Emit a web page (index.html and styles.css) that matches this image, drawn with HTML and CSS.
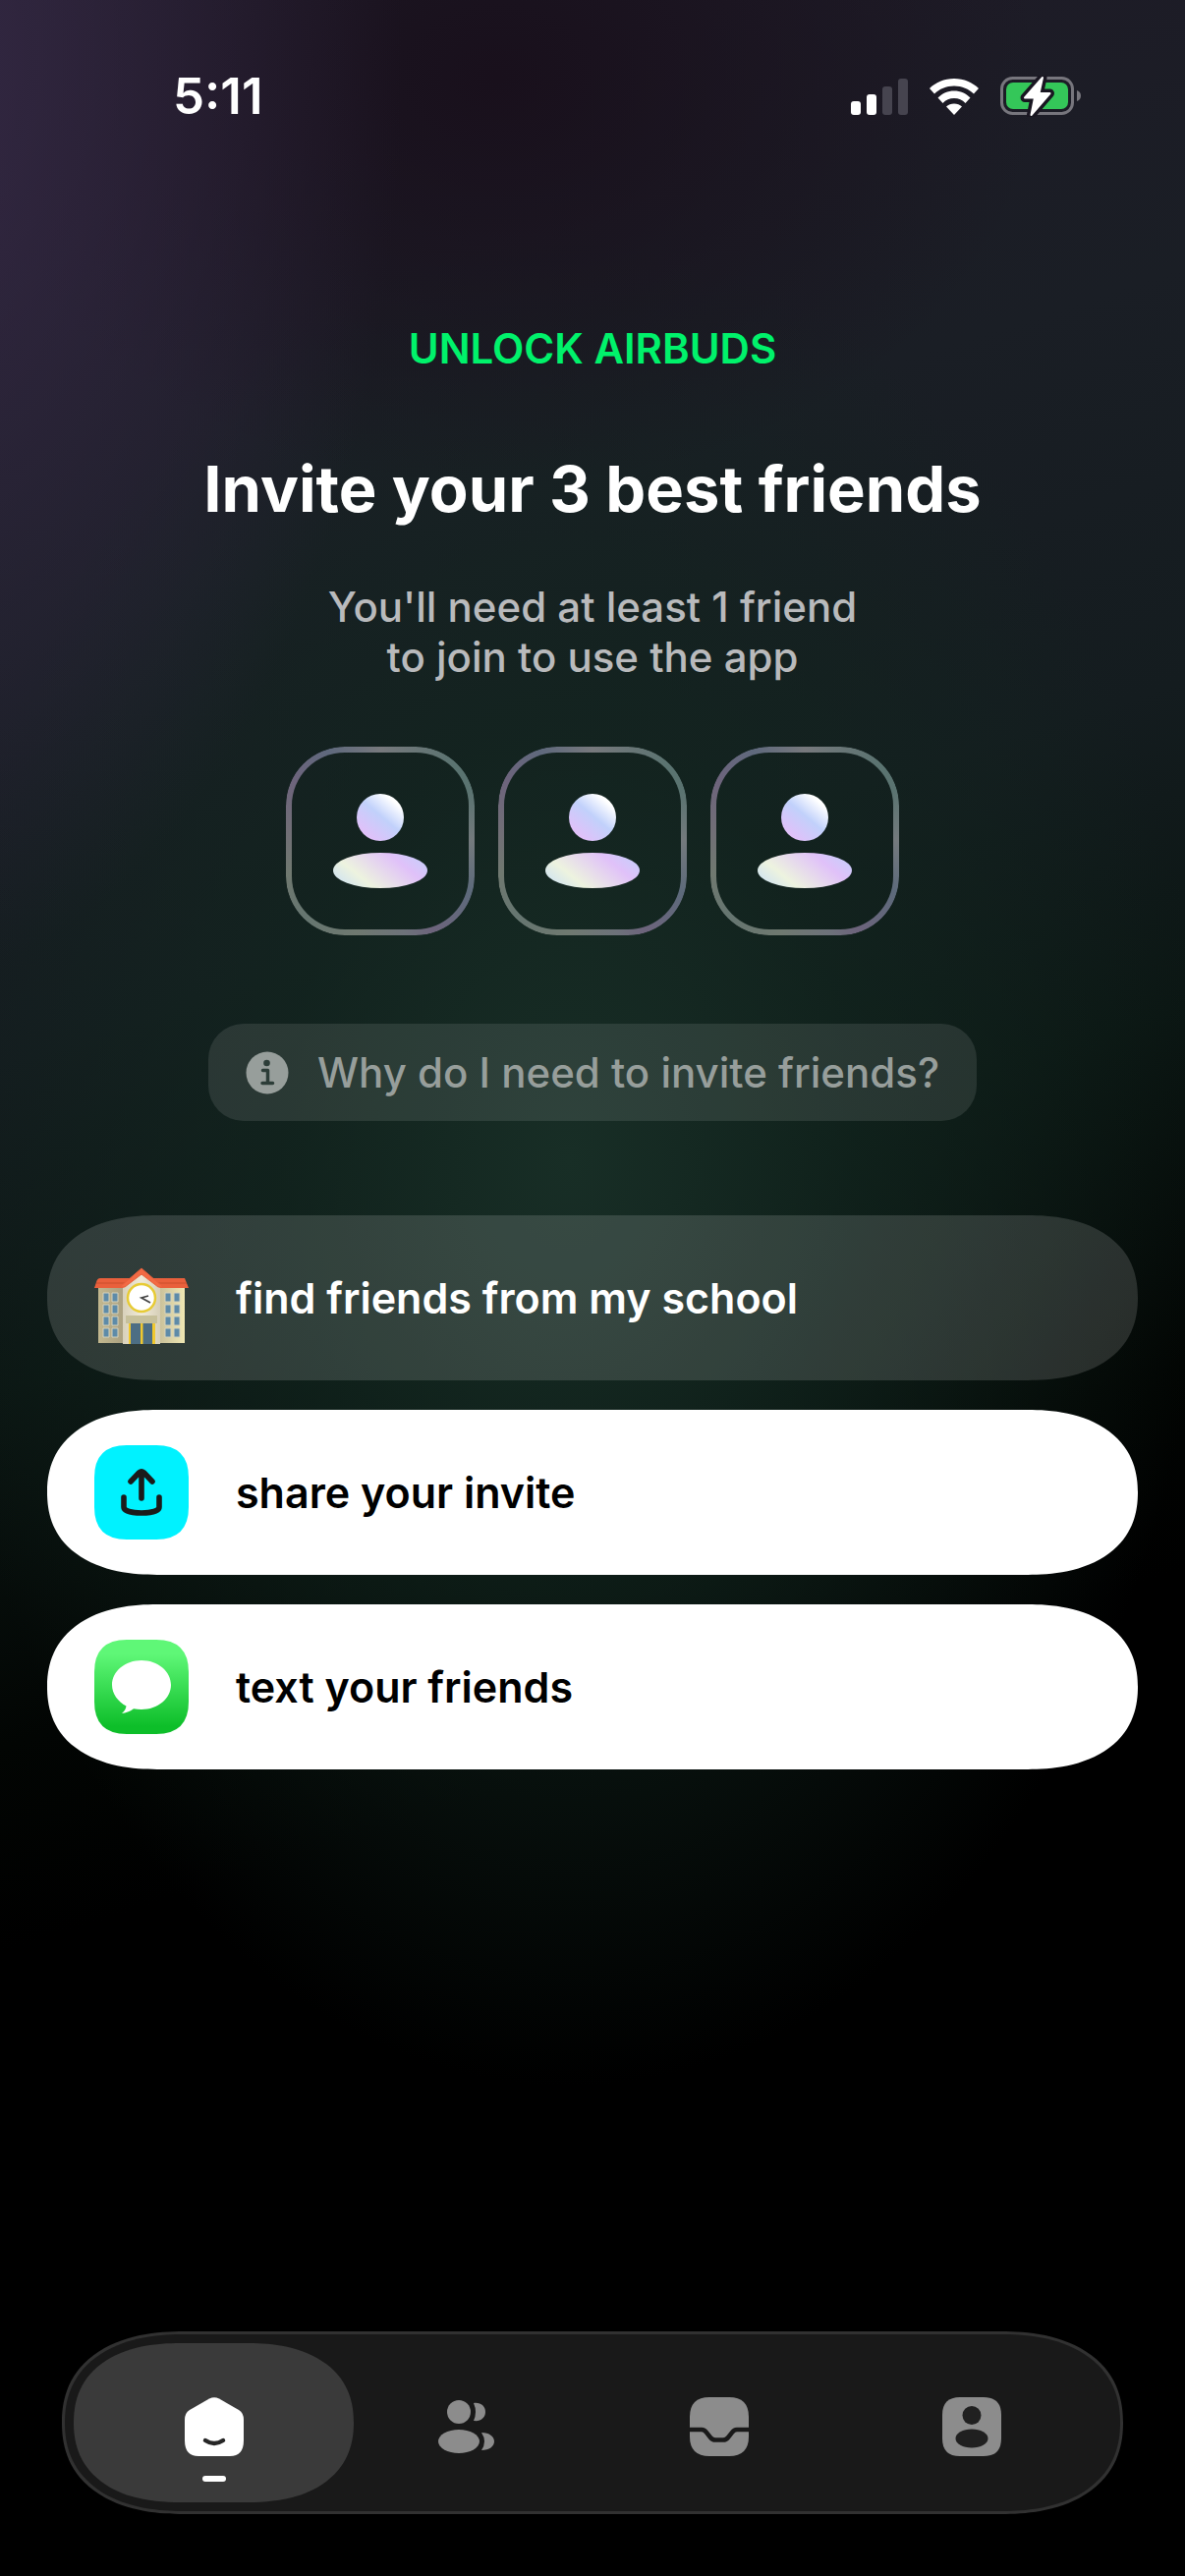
FILE: index.html
```html
<!DOCTYPE html>
<html lang="en">
<head>
<meta charset="utf-8">
<meta name="viewport" content="width=device-width, initial-scale=1">
<title>Airbuds</title>
<link rel="stylesheet" href="styles.css">
</head>
<body>
<div class="screen">
  <header class="status">
    <span class="time">5:11</span>
    <div class="status-icons">
      <svg class="signal" viewBox="0 0 58 38" aria-hidden="true">
        <rect x="0" y="24" width="10" height="14" rx="3" fill="#fff"/>
        <rect x="16" y="17" width="10" height="21" rx="3" fill="#fff"/>
        <rect x="32" y="9" width="10" height="29" rx="3" fill="#46444f"/>
        <rect x="48" y="1" width="10" height="37" rx="3" fill="#46444f"/>
      </svg>
      <svg class="wifi" viewBox="0 0 50 38" aria-hidden="true">
        <path d="M25 1C35 1 44 5 50 11L45 16.500C40 11.500 33 8.500 25 8.500S10 11.500 5 16.500L0 11C6 5 15 1 25 1Z" fill="#fff"/>
        <path d="M25 13.500C31.500 13.500 37 16 41.500 20.500L36.500 26C33.500 22.800 29.500 21 25 21S16.500 22.800 13.500 26L8.500 20.500C13 16 18.500 13.500 25 13.500Z" fill="#fff"/>
        <path d="M25 26.500C28 26.500 31 27.500 33 29.500L25 38L17 29.500C19 27.500 22 26.500 25 26.500Z" fill="#fff"/>
      </svg>
      <svg class="battery" viewBox="0 0 82 42" aria-hidden="true">
        <rect x="1.500" y="2.500" width="72" height="36" rx="11" fill="none" stroke="#77767d" stroke-width="3"/>
        <path d="M78 15C81 16 82 18 82 20.500S81 25 78 26Z" fill="#77767d"/>
        <rect x="6" y="7" width="63" height="27" rx="7" fill="#34c759"/>
        <path d="M43 2L25 22.500H35L31.500 40L50.500 18H39.500Z" fill="#fff" stroke="#191621" stroke-width="9" stroke-linejoin="round"/>
        <path d="M43 2L25 22.500H35L31.500 40L50.500 18H39.500Z" fill="#fff" stroke="#fff" stroke-width="2" stroke-linejoin="round"/>
      </svg>
    </div>
  </header>

  <main class="content">
    <p class="eyebrow">UNLOCK AIRBUDS</p>
    <h1 class="title">Invite your 3 best friends</h1>
    <p class="subtitle">You'll need at least 1 friend<br>to join to use the app</p>

    <svg class="defs" aria-hidden="true">
      <defs>
        <linearGradient id="person" gradientUnits="userSpaceOnUse" x1="62" y1="144" x2="132" y2="60">
          <stop offset="0" stop-color="#d3e5ef"/>
          <stop offset=".16" stop-color="#edf3df"/>
          <stop offset=".5" stop-color="#e0c1f9"/>
          <stop offset=".72" stop-color="#c1d1fb"/>
          <stop offset=".9" stop-color="#fff"/>
        </linearGradient>
      </defs>
    </svg>
    <div class="slots">
      <div class="slot"><svg viewBox="0 0 192 192" aria-hidden="true"><circle cx="96" cy="72" r="24" fill="url(#person)"/><ellipse cx="96" cy="126" rx="48" ry="18" fill="url(#person)"/></svg></div>
      <div class="slot"><svg viewBox="0 0 192 192" aria-hidden="true"><circle cx="96" cy="72" r="24" fill="url(#person)"/><ellipse cx="96" cy="126" rx="48" ry="18" fill="url(#person)"/></svg></div>
      <div class="slot"><svg viewBox="0 0 192 192" aria-hidden="true"><circle cx="96" cy="72" r="24" fill="url(#person)"/><ellipse cx="96" cy="126" rx="48" ry="18" fill="url(#person)"/></svg></div>
    </div>

    <button class="why" type="button">
      <svg class="info" viewBox="0 0 44 44" aria-hidden="true">
        <circle cx="22" cy="22" r="21.500" fill="#979e9b"/>
        <circle cx="21.500" cy="12" r="3.300" fill="#2c3d38"/>
        <path d="M17.500 19.500H22.500V32.500M17 32.500H27.500" fill="none" stroke="#2c3d38" stroke-width="3.500" stroke-linecap="round" stroke-linejoin="round"/>
      </svg>
      <span>Why do I need to invite friends?</span>
    </button>

    <div class="actions">
      <button class="action action-glass" type="button">
        <svg class="action-icon" viewBox="0 0 96 96" aria-hidden="true">
          <defs>
            <linearGradient id="wallLeft"><stop offset="0" stop-color="#c3b88f"/><stop offset="1" stop-color="#a99f80"/></linearGradient>
            <linearGradient id="wallRight"><stop offset="0" stop-color="#c9c09a"/><stop offset="1" stop-color="#efe7b3"/></linearGradient>
            <linearGradient id="tower"><stop offset="0" stop-color="#d8d1bb"/><stop offset=".5" stop-color="#f0ead8"/><stop offset="1" stop-color="#d6cfb8"/></linearGradient>
          </defs>
          <path d="M4 37H31V94H4Z" fill="url(#wallLeft)"/>
          <path d="M66 37H92V94H66Z" fill="url(#wallRight)"/>
          <path d="M6 28H92L96 38H0L2 32Q3 28 6 28Z" fill="#e9603c"/>
          <path d="M2 33H94" stroke="#c94e2c" stroke-width="1"/>
          <path d="M29 38L48 23L67 38V95H29Z" fill="url(#tower)"/>
          <path d="M48 18L26 37H31L48 24L65 37H70Z" fill="#f26a44" stroke="#e9603c" stroke-width="1"/>
          <circle cx="48" cy="48" r="14" fill="#fff" stroke="#e7cb35" stroke-width="2.500"/>
          <path d="M57 53L48 48L55 46" fill="none" stroke="#444" stroke-width="1.800"/>
          <rect x="32" y="66" width="32" height="8" fill="#c6c09b"/>
          <rect x="35" y="74" width="27" height="21" fill="#f0c82e"/>
          <path d="M37 74H47V95H37ZM49.500 74H59V95H49.500Z" fill="#4d6e84"/>
          <g fill="#5e8ba8" stroke="#d6d3bd" stroke-width="1">
            <path d="M9 43h6v9h-6zM18 43h6v9h-6zM72 43h6v9h-6zM81 43h6v9h-6z"/>
            <path d="M9 55h6v9h-6zM18 55h6v9h-6zM72 55h6v9h-6zM81 55h6v9h-6z"/>
            <path d="M9 67h6v9h-6zM18 67h6v9h-6zM72 67h6v9h-6zM81 67h6v9h-6z"/>
            <path d="M9 79h6v9h-6zM18 79h6v9h-6zM72 79h6v9h-6zM81 79h6v9h-6z"/>
          </g>
        </svg>
        <span>find friends from my school</span>
      </button>
      <button class="action" type="button">
        <svg class="action-icon" viewBox="0 0 96 96" aria-hidden="true">
          <path d="M33 0H63Q96 0 96 33V63Q96 96 63 96H33Q0 96 0 63V33Q0 0 33 0Z" fill="#00f2ff"/>
          <path d="M48 54V28M37 37L45.500 28Q48 26 50.500 28L59 37M30 53V63C30 67 38 69 48 69S66 67 66 63V53" fill="none" stroke="#1b1b1b" stroke-width="5.600" stroke-linecap="round" stroke-linejoin="round"/>
        </svg>
        <span>share your invite</span>
      </button>
      <button class="action" type="button">
        <svg class="action-icon" viewBox="0 0 96 96" aria-hidden="true">
          <defs><linearGradient id="bubble" x2="0" y2="1"><stop offset=".15" stop-color="#5ff777"/><stop offset=".92" stop-color="#0dbe29"/></linearGradient></defs>
          <path d="M33 0H63Q96 0 96 33V63Q96 96 63 96H33Q0 96 0 63V33Q0 0 33 0Z" fill="url(#bubble)"/>
          <path d="M48 21C64.500 21 78 32 78 46S64.500 71 48 71Q44 71 40 70.300C36 73 32 75 28 75Q32 71.500 32.500 67.500C24 63 18 55 18 46C18 32 31.500 21 48 21Z" fill="#fff"/>
        </svg>
        <span>text your friends</span>
      </button>
    </div>
  </main>

  <nav class="tabs" aria-label="Main">
    <a class="tab tab-active" href="#home" aria-label="Home">
      <svg viewBox="0 0 60 60" aria-hidden="true">
        <path d="M25 1.500Q30 -1 35 1.500L55 13Q60 16 60 23V44Q60 60 46 60H14Q0 60 0 44V23Q0 16 5 13Z" fill="#fff"/>
        <path d="M21 44Q30 50 39 44" fill="none" stroke="#262626" stroke-width="4.500" stroke-linecap="round"/>
      </svg>
    </a>
    <a class="tab" href="#friends" aria-label="Friends">
      <svg viewBox="0 0 60 60" aria-hidden="true" fill="#8c8c8c">
        <circle cx="22" cy="15" r="12"/><ellipse cx="22" cy="45" rx="21" ry="12"/>
        <path d="M37 6C44 5 49 9 49 15S44 25 37 24Q41 15 37 6Z"/>
        <path d="M45 36C53 36 58 40 58 45S53 54 45 54Q51 45 45 36Z"/>
      </svg>
    </a>
    <a class="tab" href="#inbox" aria-label="Inbox">
      <svg viewBox="0 0 60 60" aria-hidden="true">
        <path d="M20 0H40Q60 0 60 20V40Q60 60 40 60H20Q0 60 0 40V20Q0 0 20 0Z" fill="#8c8c8c"/>
        <path d="M0 33H12Q15 33 17 36L21 41Q23 43.500 26 43.500H34Q37 43.500 39 41L43 36Q45 33 48 33H60" fill="none" stroke="#191919" stroke-width="4.500"/>
      </svg>
    </a>
    <a class="tab" href="#profile" aria-label="Profile">
      <svg viewBox="0 0 60 60" aria-hidden="true">
        <path d="M18 0H42Q60 0 60 18V42Q60 60 42 60H18Q0 60 0 42V18Q0 0 18 0Z" fill="#8c8c8c"/>
        <circle cx="30" cy="18.500" r="9.500" fill="#202020"/><ellipse cx="30" cy="42" rx="16.500" ry="9.500" fill="#202020"/>
      </svg>
    </a>
  </nav>
</div>
</body>
</html>
```
FILE: styles.css
```css
* { box-sizing: border-box; }

body {
  margin: 0;
  background: #000;
  color: #fff;
  font-family: Inter, "Liberation Sans", sans-serif;
}

button {
  border: 0;
  font: inherit;
  cursor: pointer;
}

svg { display: block; }

.defs {
  position: absolute;
  width: 0;
  height: 0;
}

.screen {
  display: flex;
  flex-direction: column;
  min-height: 100vh;
  padding: 0 48px 63px;
  background:
    radial-gradient(ellipse 42% 36% at -8% 2%, rgba(58, 44, 76, .8), rgba(58, 44, 76, 0)),
    radial-gradient(ellipse 46% 16% at 42% 3%, rgba(24, 14, 26, .85), rgba(24, 14, 26, 0)),
    radial-gradient(ellipse 54% 36% at 48% 45%, rgba(24, 46, 38, 1), rgba(18, 38, 31, .7) 45%, rgba(4, 14, 10, 0)),
    linear-gradient(162deg, #1e1b27 8%, #1a1e25 22%, #141c1f 36%, #0b1613 47%, #020503 59%, #000 66%);
}

.status {
  display: flex;
  justify-content: space-between;
  align-items: center;
  height: 196px;
  padding: 0 58px 0 128px;
}

.time {
  font-size: 51px;
  font-weight: 600;
  line-height: 60px;
}

.status-icons {
  display: flex;
  align-items: center;
  gap: 22px;
}

.signal { width: 58px; height: 38px; }
.wifi { width: 50px; height: 38px; }
.battery { width: 82px; height: 42px; }

.content {
  display: flex;
  flex-direction: column;
  align-items: center;
}

.eyebrow {
  margin: 134px 0 0;
  color: #00f26b;
  font-size: 42px;
  font-weight: 600;
  line-height: 50px;
}

.title {
  margin: 78px 0 0;
  font-size: 65px;
  font-weight: 700;
  line-height: 80px;
  text-align: center;
}

.subtitle {
  margin: 54px 0 0;
  color: #b9babc;
  font-size: 42px;
  font-weight: 500;
  line-height: 51px;
  text-align: center;
}

.slots {
  display: flex;
  gap: 24px;
  margin-top: 66px;
}

.slot {
  position: relative;
  width: 192px;
  height: 192px;
}

.slot::before {
  content: "";
  position: absolute;
  inset: 0;
  padding: 6px;
  border-radius: 60px;
  background: conic-gradient(#77797d, #5a7370 45deg, #5a7370 60deg, #747a7d 90deg, #5d6a7b 120deg, #6d647c 150deg, #6d727a 165deg, #6f7970 195deg, #657570 225deg, #707970 250deg, #716f76 275deg, #6d647c 305deg, #5f697d 330deg, #77797d);
  mask: linear-gradient(#000 0 0) content-box exclude, linear-gradient(#000 0 0);
}

.why {
  display: flex;
  align-items: center;
  gap: 29px;
  margin-top: 90px;
  padding: 24px 38px;
  border-radius: 36px;
  background: rgba(255, 255, 255, .1);
  color: #979e9b;
  font-size: 42px;
  font-weight: 500;
  line-height: 51px;
}

.info { width: 44px; height: 44px; }

.actions {
  display: flex;
  flex-direction: column;
  align-self: stretch;
  gap: 30px;
  margin-top: 96px;
}

.action {
  display: flex;
  align-items: center;
  gap: 48px;
  padding: 36px 48px;
  border-radius: 96px / 84px;
  background: #fff;
  color: #000;
  font-size: 43px;
  font-weight: 600;
  line-height: 51px;
  text-align: left;
}

.action-glass {
  background: rgba(255, 255, 255, .14);
  color: #fff;
}

.action-icon {
  width: 96px;
  height: 96px;
}

.tabs {
  display: flex;
  margin: auto 15px 0;
  padding: 9px 23px;
  border: 3px solid #313131;
  border-radius: 106px / 93px;
  background: #191919;
}

.tab {
  position: relative;
  display: flex;
  flex: 1;
  align-items: center;
  justify-content: center;
  height: 162px;
  padding-top: 8px;
}

.tab svg {
  position: relative;
  width: 60px;
  height: 60px;
}

.tab-active::before {
  content: "";
  position: absolute;
  inset: 0 -14px;
  border-radius: 94px / 81px;
  background: #3a3a3a;
}

.tab-active::after {
  content: "";
  position: absolute;
  bottom: 21px;
  width: 24px;
  height: 6px;
  border-radius: 3px;
  background: #fff;
}

/* Continuous corners where the browser can draw them */
@supports (corner-shape: superellipse(1.2)) {
  .action,
  .tabs,
  .tab-active::before {
    corner-shape: superellipse(1.2);
  }

  .action { border-radius: 112px / 84px; }
  .tabs { border-radius: 124px / 93px; }
  .tab-active::before { border-radius: 108px / 81px; }
}
```
